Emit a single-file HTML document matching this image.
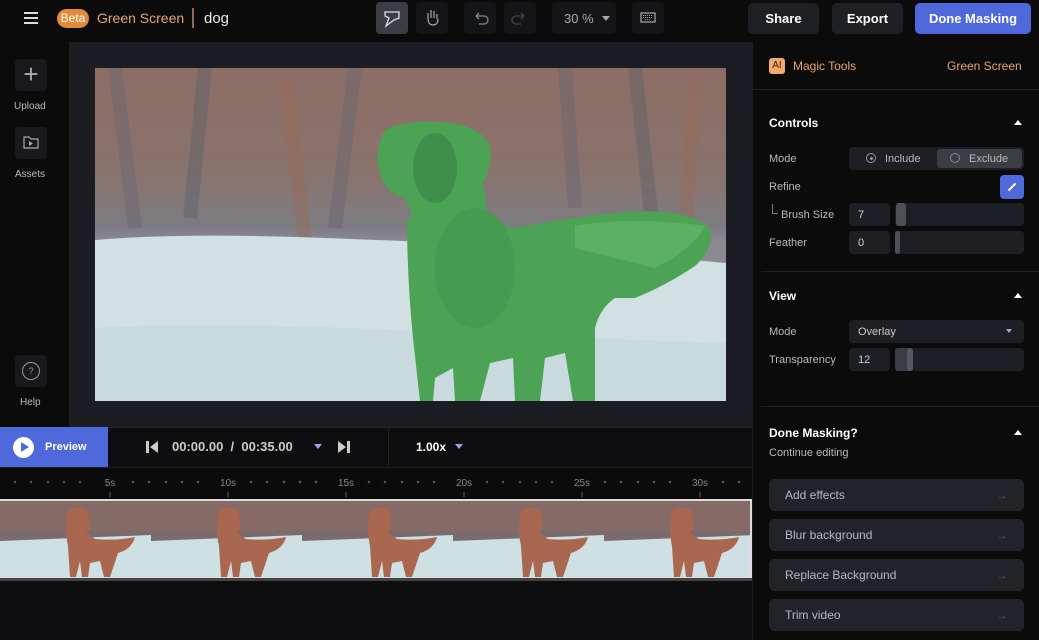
<!DOCTYPE html>
<html><head><style>
*{box-sizing:border-box;margin:0;padding:0}
body{width:1039px;height:640px;background:#0b0b0c;font-family:"Liberation Sans",sans-serif;color:#ddd;position:relative;overflow:hidden;font-size:12px}
.a{position:absolute}
.btn{position:absolute;border-radius:5px;background:#1f2025;color:#fff;font-weight:bold;font-size:13px;display:flex;align-items:center;justify-content:center}
.ib{position:absolute;top:2px;width:32px;height:32px;border-radius:4px;background:#141518}
.lbl{position:absolute;left:769px;color:#b8bac0;font-size:11px}
.inp{position:absolute;background:#1e1f24;border-radius:4px;color:#ccc;font-size:11px;padding-left:9px;display:flex;align-items:center}
.act{position:absolute;left:769px;width:255px;height:32px;background:#222328;border-radius:5px;color:#b8bac0;font-size:12px;padding-left:16px;display:flex;align-items:center}
.act span{position:absolute;right:16px;color:#555}
.h{position:absolute;left:769px;color:#fff;font-weight:bold;font-size:12px}
.tri{position:absolute;left:1014px;width:0;height:0;border-left:4px solid transparent;border-right:4px solid transparent;border-bottom:5px solid #fff}
</style></head><body>
<!-- top bar -->
<div class="a" style="left:24px;top:12px;width:14px;height:2px;background:#ddd;box-shadow:0 5px 0 #ddd,0 10px 0 #ddd"></div>
<div class="a" style="left:57px;top:9px;width:32px;height:19px;border-radius:10px;background:#e38a3a;color:#fff;font-size:12px;text-align:center;line-height:19px">Beta</div>
<div class="a" style="left:97px;top:10px;font-size:14px;color:#e7a56f">Green Screen</div>
<div class="a" style="left:192px;top:8px;width:2px;height:20px;background:#8a6a55"></div>
<div class="a" style="left:204px;top:10px;font-size:15px;color:#eee">dog</div>
<div class="ib" style="left:376px;background:#3b3d45"><svg width="32" height="32"><path d="M9 10h14v6l-5 2-8 6 3-8-4-2z" fill="none" stroke="#ddd" stroke-width="1.3"/></svg></div>
<div class="ib" style="left:416px"><svg width="32" height="32"><path d="M12 17v-6m3 5v-8m3 8v-7m3 8v-5m-9 4c0 5 2 7 5 7s5-2 5-6" fill="none" stroke="#aaa" stroke-width="1.2"/></svg></div>
<div class="ib" style="left:464px"><svg width="32" height="32"><path d="M12 14h8a4 4 0 010 8h-5M12 14l3-3m-3 3l3 3" fill="none" stroke="#888" stroke-width="1.3"/></svg></div>
<div class="ib" style="left:504px"><svg width="32" height="32"><path d="M20 14h-8a4 4 0 000 8h5M20 14l-3-3m3 3l-3 3" fill="none" stroke="#444" stroke-width="1.3"/></svg></div>
<div class="ib" style="left:552px;width:64px;color:#aaa;font-size:13px;padding:9px 0 0 12px">30 %<span class="a" style="left:50px;top:14px;border-left:4px solid transparent;border-right:4px solid transparent;border-top:5px solid #aaa"></span></div>
<div class="ib" style="left:632px"><svg width="32" height="32"><rect x="9" y="11" width="14" height="9" fill="none" stroke="#aaa" stroke-width="1.2"/><path d="M11 13.5h10M11 15.5h10M13 17.7h6" stroke="#aaa" stroke-width="1" stroke-dasharray="1 1"/></svg></div>
<div class="btn" style="left:748px;top:3px;width:71px;height:31px">Share</div>
<div class="btn" style="left:832px;top:3px;width:71px;height:31px">Export</div>
<div class="btn" style="left:915px;top:3px;width:116px;height:31px;background:#4f68dc">Done Masking</div>
<!-- left sidebar -->
<div class="a" style="left:0;top:42px;width:69px;height:385px;background:#0b0b0c"></div>
<div class="a" style="left:15px;top:59px;width:32px;height:32px;background:#18191c;border-radius:4px;color:#aaa;font-size:26px;text-align:center;line-height:30px;font-weight:100">+</div>
<div class="a" style="left:14px;top:101px;color:#bbb;font-size:10px">Upload</div>
<div class="a" style="left:15px;top:127px;width:32px;height:32px;background:#18191c;border-radius:4px"><svg width="32" height="32"><path d="M9 10h5l2 2h7v9H9z" fill="none" stroke="#aaa" stroke-width="1.2"/><path d="M14 14l4 2.5-4 2.5z" fill="#aaa"/></svg></div>
<div class="a" style="left:15px;top:169px;color:#bbb;font-size:10px">Assets</div>
<div class="a" style="left:15px;top:355px;width:32px;height:32px;background:#18191c;border-radius:4px"><div class="a" style="left:7px;top:7px;width:18px;height:18px;border:1.2px solid #999;border-radius:50%;color:#999;font-size:9px;text-align:center;line-height:16px">?</div></div>
<div class="a" style="left:20px;top:397px;color:#bbb;font-size:10px">Help</div>
<!-- canvas -->
<div class="a" style="left:69px;top:42px;width:683px;height:385px;background:#1c1d22"></div>
<div class="a" style="left:95px;top:68px;width:631px;height:333px;overflow:hidden;background:linear-gradient(180deg,#8d6e66 0%,#8a736c 30%,#7d7c82 48%,#8a8a90 52%)">
<svg width="631" height="333" style="position:absolute;left:0;top:0">
<g opacity=".45" fill="none" stroke-width="14">
<path d="M20 0 L40 160" stroke="#6a6670"/><path d="M110 0 L95 150" stroke="#5f6068"/><path d="M190 10 L210 170" stroke="#9a6a5a"/><path d="M260 0 L240 160" stroke="#6a6670"/><path d="M540 0 L560 180" stroke="#5f6068"/><path d="M600 10 L590 170" stroke="#9a6a5a"/><path d="M470 0 L480 140" stroke="#6a6670"/>
</g>
<path d="M0 172 C120 162 260 172 360 175 C450 180 560 188 631 195 L631 333 L0 333Z" fill="#d0e0e3"/>
<path d="M0 260 C150 250 300 265 631 275 L631 333 L0 333Z" fill="#c8dadd"/>
<!-- dog -->
<g fill="#4ca356">
<path d="M290 62 Q310 52 345 54 Q385 56 395 78 Q398 98 388 115 L392 145 Q395 150 390 160 L320 160 Q315 140 310 130 Q290 125 285 105 Q278 85 290 62Z"/>
<path d="M312 150 L395 145 Q410 160 420 160 Q470 150 520 145 Q590 138 615 160 Q620 180 600 198 Q570 218 540 230 L520 230 Q505 240 500 260 L500 333 L478 333 L470 285 L450 290 L445 333 L420 333 L418 290 L395 295 L385 333 L360 333 L358 300 L340 310 L338 333 L325 333 L318 270 Q312 210 312 150Z"/>
</g>
<path d="M480 158 Q540 148 610 158 Q600 180 560 200 Q520 190 480 180Z" fill="#5bb062"/>
<ellipse cx="340" cy="100" rx="22" ry="35" fill="#3f8e4b"/>
<ellipse cx="380" cy="200" rx="40" ry="60" fill="#459c50"/>
</svg></div>
<!-- preview bar -->
<div class="a" style="left:0;top:427px;width:752px;height:40px;background:#0e0e10;border-top:1px solid #222"></div>
<div class="a" style="left:0;top:427px;width:108px;height:40px;background:#4f68dc"></div>
<div class="a" style="left:13px;top:437px;width:21px;height:21px;border-radius:50%;background:#fff"><div class="a" style="left:8px;top:5px;border-top:5.5px solid transparent;border-bottom:5.5px solid transparent;border-left:8px solid #4f68dc"></div></div>
<div class="a" style="left:45px;top:441px;color:#fff;font-weight:bold;font-size:11px">Preview</div>
<div class="a" style="left:146px;top:441px;width:3px;height:12px;background:#ccc"></div>
<div class="a" style="left:150px;top:441px;border-top:6px solid transparent;border-bottom:6px solid transparent;border-right:8px solid #ccc"></div>
<div class="a" style="left:172px;top:439px;color:#ccc;font-size:13px;font-weight:bold">00:00.00 &nbsp;/ &nbsp;00:35.00</div>
<div class="a" style="left:314px;top:444px;border-left:4px solid transparent;border-right:4px solid transparent;border-top:5px solid #9aa3e8"></div>
<div class="a" style="left:338px;top:441px;border-top:6px solid transparent;border-bottom:6px solid transparent;border-left:8px solid #ccc"></div>
<div class="a" style="left:347px;top:441px;width:3px;height:12px;background:#ccc"></div>
<div class="a" style="left:388px;top:428px;width:1px;height:39px;background:#222"></div>
<div class="a" style="left:416px;top:440px;color:#fff;font-size:12px;font-weight:bold">1.00x</div>
<div class="a" style="left:455px;top:444px;border-left:4px solid transparent;border-right:4px solid transparent;border-top:5px solid #9aa3e8"></div>
<!-- ruler -->
<div class="a" style="left:0;top:467px;width:752px;height:33px;background:#0b0b0c;border-top:1px solid #1e1e22"></div>
<svg class="a" style="left:0;top:470px" width="752" height="30">
<g fill="#555"><circle cx="15" cy="12" r="1.3"/><circle cx="31" cy="12" r="1.3"/><circle cx="48" cy="12" r="1.3"/><circle cx="64" cy="12" r="1.3"/><circle cx="80" cy="12" r="1.3"/><circle cx="133" cy="12" r="1.3"/><circle cx="149" cy="12" r="1.3"/><circle cx="166" cy="12" r="1.3"/><circle cx="182" cy="12" r="1.3"/><circle cx="198" cy="12" r="1.3"/><circle cx="251" cy="12" r="1.3"/><circle cx="267" cy="12" r="1.3"/><circle cx="284" cy="12" r="1.3"/><circle cx="300" cy="12" r="1.3"/><circle cx="316" cy="12" r="1.3"/><circle cx="369" cy="12" r="1.3"/><circle cx="385" cy="12" r="1.3"/><circle cx="402" cy="12" r="1.3"/><circle cx="418" cy="12" r="1.3"/><circle cx="434" cy="12" r="1.3"/><circle cx="487" cy="12" r="1.3"/><circle cx="503" cy="12" r="1.3"/><circle cx="520" cy="12" r="1.3"/><circle cx="536" cy="12" r="1.3"/><circle cx="552" cy="12" r="1.3"/><circle cx="605" cy="12" r="1.3"/><circle cx="621" cy="12" r="1.3"/><circle cx="638" cy="12" r="1.3"/><circle cx="654" cy="12" r="1.3"/><circle cx="670" cy="12" r="1.3"/><circle cx="723" cy="12" r="1.3"/><circle cx="739" cy="12" r="1.3"/></g>
<g stroke="#666"><path d="M110 22v5M228 22v5M346 22v5M464 22v5M582 22v5M700 22v5"/></g>
<g fill="#888" font-size="10" font-family="Liberation Sans" text-anchor="middle"><text x="110" y="16">5s</text><text x="228" y="16">10s</text><text x="346" y="16">15s</text><text x="464" y="16">20s</text><text x="582" y="16">25s</text><text x="700" y="16">30s</text></g>
</svg>
<!-- filmstrip -->
<div class="a" style="left:0;top:499px;width:752px;height:81px;background:#ddd"></div>
<svg class="a" style="left:0;top:501px" width="750" height="76">
<defs><g id="fr">
<rect width="151" height="76" fill="#7a6c6e"/>
<path d="M0 0h151v30H0z" fill="#8a6a62" opacity=".7"/>
<path d="M0 40 L151 34 L151 76 L0 76Z" fill="#cfe0e4"/>
<path d="M68 10 Q78 3 88 10 L90 28 L86 32 L95 38 Q115 40 135 36 Q132 48 118 52 L110 76 L104 76 L100 60 L90 62 L88 76 L82 76 L80 60 L76 76 L70 76 L68 45 Q64 28 68 10Z" fill="#a8674e"/>
</g></defs>
<use href="#fr" x="0"/><use href="#fr" x="151"/><use href="#fr" x="302"/><use href="#fr" x="453"/><use href="#fr" x="604"/>
</svg>
<div class="a" style="left:0;top:578px;width:752px;height:3px;background:#444"></div>
<div class="a" style="left:0;top:581px;width:752px;height:59px;background:#0e0e10"></div>
<!-- right panel -->
<div class="a" style="left:752px;top:42px;width:1px;height:598px;background:#1e1e22"></div>
<div class="a" style="left:769px;top:58px;width:16px;height:16px;border-radius:3px;background:#f2a96a;color:#3a2010;font-size:10px;text-align:center;line-height:16px">AI</div>
<div class="a" style="left:793px;top:59px;color:#e7a56f;font-size:12px">Magic Tools</div>
<div class="a" style="left:947px;top:59px;color:#e7a56f;font-size:12px">Green Screen</div>
<div class="a" style="left:753px;top:89px;width:286px;height:1px;background:#222"></div>
<div class="h" style="top:116px">Controls</div><div class="tri" style="top:120px"></div>
<div class="lbl" style="top:153px">Mode</div>
<div class="inp" style="left:849px;top:147px;width:175px;height:23px;padding:0"></div>
<div class="a" style="left:866px;top:153px;width:10px;height:10px;border:1px solid #999;border-radius:50%"><div class="a" style="left:2.5px;top:2.5px;width:3px;height:3px;background:#999;border-radius:50%"></div></div>
<div class="a" style="left:885px;top:153px;color:#bbb;font-size:11px">Include</div>
<div class="a" style="left:937px;top:149px;width:85px;height:19px;background:#3b3d45;border-radius:3px"></div>
<div class="a" style="left:950px;top:153px;width:10px;height:10px;border:1px solid #888;border-radius:50%"></div>
<div class="a" style="left:969px;top:153px;color:#bbb;font-size:11px">Exclude</div>
<div class="lbl" style="top:181px">Refine</div>
<div class="a" style="left:1000px;top:175px;width:24px;height:24px;background:#4f68dc;border-radius:4px"><div class="a" style="left:7px;top:11px;width:10px;height:2px;background:#fff;transform:rotate(-45deg)"></div></div>
<div class="a" style="left:772px;top:204px;width:6px;height:10px;border-left:1px solid #777;border-bottom:1px solid #777"></div>
<div class="lbl" style="left:781px;top:209px">Brush Size</div>
<div class="inp" style="left:849px;top:203px;width:41px;height:23px">7</div>
<div class="inp" style="left:895px;top:203px;width:129px;height:23px;padding:0"><div class="a" style="left:1px;top:0;width:10px;height:23px;background:#4d5058;border-radius:3px"></div></div>
<div class="lbl" style="top:237px">Feather</div>
<div class="inp" style="left:849px;top:231px;width:41px;height:23px">0</div>
<div class="inp" style="left:895px;top:231px;width:129px;height:23px;padding:0"><div class="a" style="left:0;top:0;width:5px;height:23px;background:#4d5058;border-radius:3px"></div></div>
<div class="a" style="left:761px;top:271px;width:278px;height:1px;background:#222"></div>
<div class="h" style="top:289px">View</div><div class="tri" style="top:293px"></div>
<div class="lbl" style="top:326px">Mode</div>
<div class="inp" style="left:849px;top:320px;width:175px;height:23px;font-size:11px">Overlay<span class="a" style="left:157px;top:9px;border-left:3.5px solid transparent;border-right:3.5px solid transparent;border-top:4px solid #9aa3e8"></span></div>
<div class="lbl" style="top:354px">Transparency</div>
<div class="inp" style="left:849px;top:348px;width:41px;height:23px">12</div>
<div class="inp" style="left:895px;top:348px;width:129px;height:23px;padding:0"><div class="a" style="left:0;top:0;width:18px;height:23px;background:#3b3d45;border-radius:3px"></div><div class="a" style="left:12px;top:0;width:6px;height:23px;background:#55585f;border-radius:3px"></div></div>
<div class="a" style="left:761px;top:406px;width:278px;height:1px;background:#222"></div>
<div class="h" style="top:426px">Done Masking?</div><div class="tri" style="top:430px"></div>
<div class="lbl" style="top:447px">Continue editing</div>
<div class="act" style="top:479px">Add effects<span>→</span></div>
<div class="act" style="top:519px">Blur background<span>→</span></div>
<div class="act" style="top:559px">Replace Background<span>→</span></div>
<div class="act" style="top:599px">Trim video<span>→</span></div>
</body></html>
